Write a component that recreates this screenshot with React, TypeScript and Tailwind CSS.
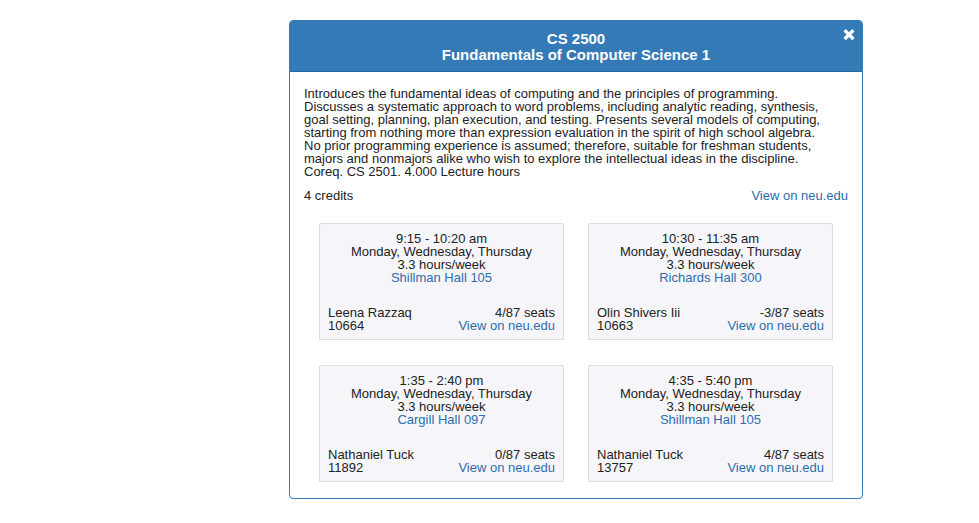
type Section = {
  id: string;
  time: string;
  room: string;
  professor: string;
  seats: string;
};

const sections: Section[] = [
  { id: "10664", time: "9:15 - 10:20 am", room: "Shillman Hall 105", professor: "Leena Razzaq", seats: "4/87 seats" },
  { id: "10663", time: "10:30 - 11:35 am", room: "Richards Hall 300", professor: "Olin Shivers Iii", seats: "-3/87 seats" },
  { id: "11892", time: "1:35 - 2:40 pm", room: "Cargill Hall 097", professor: "Nathaniel Tuck", seats: "0/87 seats" },
  { id: "13757", time: "4:35 - 5:40 pm", room: "Shillman Hall 105", professor: "Nathaniel Tuck", seats: "4/87 seats" },
];

function SectionCard({ section }: { section: Section }) {
  return (
    <article className="rounded-t-xs border border-[#dddddd] bg-[#f6f6fa] px-2 pt-2 pb-[7px]">
      <div className="flex flex-col items-center text-center">
        <p>{section.time}</p>
        <p>Monday, Wednesday, Thursday</p>
        <p>3.3 hours/week</p>
        <a href="#map" className="text-[#2d6cae]">{section.room}</a>
      </div>
      <div className="mt-[22px] flex justify-between">
        <div>
          <p>{section.professor}</p>
          <p>{section.id}</p>
        </div>
        <div className="text-right">
          <p>{section.seats}</p>
          <a href="#section" className="block text-[#2d6cae]">View on neu.edu</a>
        </div>
      </div>
    </article>
  );
}

export default function App() {
  return (
    <main className="bg-white pt-5 pr-[116px] pb-6 pl-[289px] font-['Liberation_Sans',Arial,sans-serif] text-[13px] leading-[13px] text-[#222222]">
      <section className="rounded border border-[#337ab7]">
        <header className="relative rounded-t-[3px] border-b border-[#2467a8] bg-[#337ab7] pt-2.5 pb-2 text-center text-[15px] leading-4 font-bold text-white">
          <h1>
            CS 2500
            <br />
            Fundamentals of Computer Science 1
          </h1>
          <button type="button" aria-label="Close" className="absolute top-[5px] right-[5px]">
            <svg viewBox="0 0 1792 1792" className="size-4" fill="currentColor" aria-hidden="true">
              <path d="M1490 1322q0 40-28 68l-136 136q-28 28-68 28t-68-28l-294-294-294 294q-28 28-68 28t-68-28l-136-136q-28-28-28-68t28-68l294-294-294-294q-28-28-28-68t28-68l136-136q28-28 68-28t68 28l294 294 294-294q28-28 68-28t68 28l136 136q28 28 28 68t-28 68l-294 294 294 294q28 28 28 68z" />
            </svg>
          </button>
        </header>
        <div className="px-3.5 pt-[15px] pb-4">
          <p className="pr-5">
            Introduces the fundamental ideas of computing and the principles of programming. Discusses a systematic
            approach to word problems, including analytic reading, synthesis, goal setting, planning, plan execution,
            and testing. Presents several models of computing, starting from nothing more than expression evaluation in
            the spirit of high school algebra. No prior programming experience is assumed; therefore, suitable for
            freshman students, majors and nonmajors alike who wish to explore the intellectual ideas in the discipline.
            Coreq. CS 2501. 4.000 Lecture hours
          </p>
          <div className="mt-[11px] flex justify-between">
            <span>4 credits</span>
            <a href="#course" className="text-[#2d6cae]">View on neu.edu</a>
          </div>
          <div className="mt-[21px] grid grid-cols-2 gap-x-6 gap-y-[25px] px-[15px]">
            {sections.map((section) => (
              <SectionCard key={section.id} section={section} />
            ))}
          </div>
        </div>
      </section>
    </main>
  );
}
